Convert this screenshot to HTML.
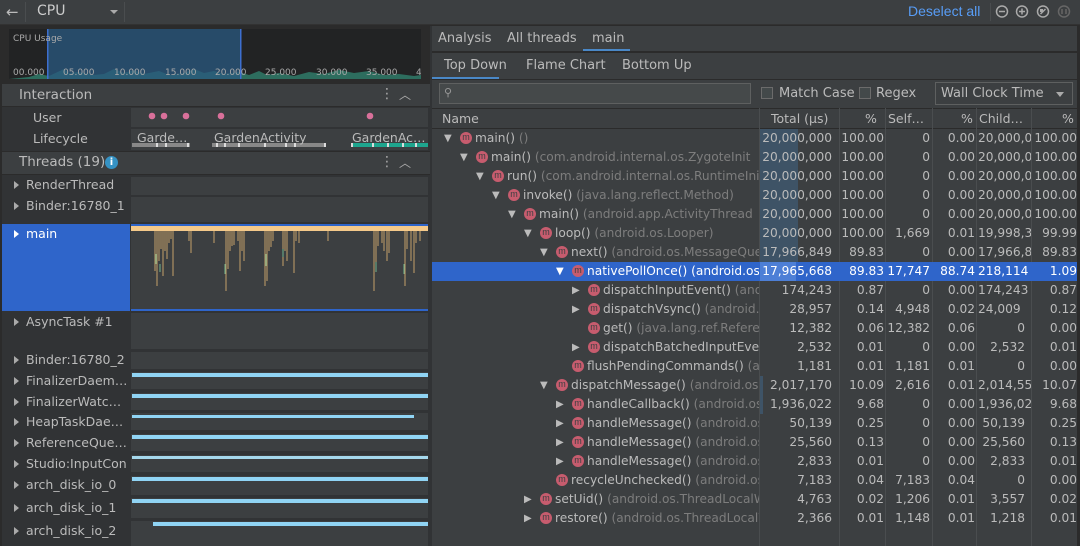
<!DOCTYPE html>
<html><head><meta charset="utf-8">
<style>
*{box-sizing:border-box;margin:0;padding:0}
body{width:1080px;height:546px;background:#2b2b2b;font-family:"DejaVu Sans","Liberation Sans",sans-serif;font-size:13px;color:#bbbbbb;position:relative;overflow:hidden}
.a{position:absolute}
.t{position:absolute;white-space:nowrap}
.row{position:absolute;left:432px;width:648px;height:19px;font-size:12.2px}
.nm{position:absolute;left:0;top:0;width:327px;height:19px;overflow:hidden;white-space:nowrap}
.v{position:absolute;top:0;height:19px;line-height:19px;text-align:right;white-space:nowrap;overflow:hidden}
.ic{display:inline-block;width:12px;height:12px;border-radius:50%;background:#c75c6e;color:#3c3f41;font-size:9px;line-height:11px;text-align:center;vertical-align:middle;position:relative;top:-1px;margin-right:3px;font-family:"Liberation Sans",sans-serif}
.ar{position:absolute;top:0;font-size:10px;color:#bbb;line-height:19px}
.g{color:#7d7d7d}
.lab{position:absolute;left:0;width:130px;color:#bbb;white-space:nowrap;overflow:hidden;font-size:12.5px}
.trk{position:absolute;left:131px;width:297px;background:#3c3f41}
.tri{display:inline-block;width:0;height:0;border-left:5px solid #aaa;border-top:4px solid transparent;border-bottom:4px solid transparent;margin:0 7px 0 14px}
</style></head><body>
<div class="a" style="left:0;top:0;width:1080px;height:25px;background:#3c3f41;border-bottom:1px solid #323232"></div>
<div class="t" style="left:6px;top:3px;font-size:15px;color:#bbb">←</div>
<div class="a" style="left:25px;top:2px;width:1px;height:20px;background:#4a4d4f"></div>
<div class="t" style="left:37px;top:3px;font-size:14px;color:#ccc">CPU</div>
<div class="a" style="left:110px;top:10px;border-left:4px solid transparent;border-right:4px solid transparent;border-top:4px solid #aaa"></div>
<div class="a" style="left:124px;top:2px;width:1px;height:20px;background:#4a4d4f"></div>
<div class="t" style="left:908px;top:3px;font-size:14px;color:#589df6;font-family:'Liberation Sans',sans-serif">Deselect all</div>
<div class="a" style="left:990px;top:3px;width:1px;height:18px;background:#4a4d4f"></div>
<svg class="a" style="left:994px;top:4px" width="84" height="17" viewBox="0 0 84 17" fill="none" stroke="#aaa" stroke-width="1.5">
<circle cx="8" cy="7.5" r="5.5"/><path d="M5 7.5h6"/>
<circle cx="28" cy="7.5" r="5.5"/><path d="M25 7.5h6M28 4.5v6"/>
<circle cx="49" cy="7.5" r="5.5"/><path d="M46.5 10l5-5" /><rect x="46" y="5" width="3" height="3" fill="#aaa" stroke="none"/>
<circle cx="70" cy="7.5" r="5.5" stroke="#666"/><path d="M68 5v5M72 5v5" stroke="#666"/>
</svg>
<div class="a" style="left:0;top:26px;width:430px;height:520px;background:#2b2b2b"></div>
<div class="a" style="left:430px;top:26px;width:2px;height:520px;background:#313335"></div>
<div class="a" style="left:9px;top:29px;width:412px;height:50px;background:#222324"></div>
<svg class="a" style="left:9px;top:29px" width="412" height="50">
<path d="M0 50 L20 48 L30 45 L40 47 L55 40 L60 44 L70 43 L85 46 L95 45 L105 40 L115 44 L125 41 L135 45 L150 42 L160 46 L175 44 L185 40 L195 44 L205 42 L215 45 L230 43 L240 46 L250 42 L258 46 L270 44 L285 47 L300 43 L315 45 L330 41 L345 44 L360 42 L375 46 L390 45 L405 47 L412 46 L412 50Z" fill="#2f7a68" opacity="0.85"/>
<rect x="38" y="0" width="194" height="50" fill="#2a5a80" opacity="0.75"/>
<rect x="38" y="0" width="1.5" height="50" fill="#3d6fd0"/><rect x="231" y="0" width="1.5" height="50" fill="#3d6fd0"/>
<g fill="#aaa" font-family="DejaVu Sans, sans-serif" font-size="9">
<text x="4" y="12">CPU Usage</text>
<text x="4" y="46">00.000</text><text x="54" y="46">05.000</text><text x="105" y="46">10.000</text><text x="156" y="46">15.000</text><text x="206" y="46">20.000</text><text x="256" y="46">25.000</text><text x="307" y="46">30.000</text><text x="357" y="46">35.000</text><text x="407" y="46">4</text>
</g></svg>
<div class="a" style="left:2px;top:84px;width:428px;height:22px;background:#3c3f41"></div>
<div class="t" style="left:19px;top:87px;font-size:13.5px">Interaction</div>
<div class="t" style="left:380px;top:86px;font-size:14px;color:#aaa">⋮</div>
<div class="t" style="left:399px;top:86px;font-size:12px;color:#aaa">︿</div>
<div class="a" style="left:2px;top:107px;width:428px;height:44px;background:#313335"></div>
<div class="t" style="left:33px;top:110px;font-size:12.5px">User</div>
<div class="t" style="left:33px;top:131px;font-size:12.5px">Lifecycle</div>
<div class="a" style="left:131px;top:108px;width:297px;height:19px;background:#3c3f41"></div>
<svg class="a" style="left:131px;top:108px" width="297" height="42">
<g fill="#d9709a"><circle cx="21" cy="8" r="3.3"/><circle cx="33" cy="8" r="3.3"/><circle cx="55" cy="8" r="3.3"/><circle cx="90" cy="8" r="3.3"/><circle cx="239" cy="8" r="3.3"/></g>
<rect x="0" y="21" width="297" height="21" fill="#3c3f41"/>
<rect x="1" y="35" width="58" height="4" fill="#888"/><rect x="81" y="35" width="114" height="4" fill="#888"/><rect x="220" y="35" width="77" height="4" fill="#1ea58e"/>
<g fill="#ddd"><rect x="25" y="35" width="2" height="4"/><rect x="34" y="35" width="2" height="4"/><rect x="56" y="35" width="2" height="4"/><rect x="85" y="35" width="2" height="4"/><rect x="93" y="35" width="2" height="4"/><rect x="107" y="35" width="2" height="4"/><rect x="133" y="35" width="2" height="4"/><rect x="154" y="35" width="2" height="4"/><rect x="163" y="35" width="2" height="4"/><rect x="193" y="35" width="2" height="4"/><rect x="220" y="35" width="2" height="4"/><rect x="241" y="35" width="2" height="4"/><rect x="256" y="35" width="2" height="4"/><rect x="271" y="35" width="2" height="4"/><rect x="284" y="35" width="2" height="4"/></g>
<g fill="#bbb" font-family="DejaVu Sans, sans-serif" font-size="12.5"><text x="6" y="34">Garde…</text><text x="83" y="34">GardenActivity</text><text x="221" y="34">GardenAc…</text></g>
</svg>
<div class="a" style="left:2px;top:152px;width:428px;height:22px;background:#3c3f41"></div>
<div class="t" style="left:19px;top:154px;font-size:13.5px">Threads (19)</div>
<div class="a" style="left:105px;top:156px;width:13px;height:13px;border-radius:50%;background:#3592c4;color:#fff;font-size:10px;font-weight:bold;text-align:center;line-height:13px">i</div>
<div class="t" style="left:380px;top:154px;font-size:14px;color:#aaa">⋮</div>
<div class="t" style="left:399px;top:154px;font-size:12px;color:#aaa">︿</div>
<div class="a" style="left:2px;top:175px;width:428px;height:371px;background:#313335"></div>
<div class="lab" style="top:177px"><span class="tri"></span>RenderThread</div>
<div class="trk" style="top:177px;height:18px"></div>
<div class="lab" style="top:198px"><span class="tri"></span>Binder:16780_1</div>
<div class="trk" style="top:197px;height:25px"></div>
<div class="a" style="left:2px;top:224px;width:128px;height:87px;background:#2f65ca"></div>
<div class="lab" style="top:226px;color:#fff"><span class="tri" style="border-left-color:#fff"></span>main</div>
<div class="trk" style="top:224px;height:87px"></div>
<svg class="a" style="left:131px;top:224px" width="297" height="88">
<rect x="0" y="0" width="297" height="2" fill="#2f65ca"/>
<rect x="0" y="2" width="297" height="5" fill="#f4c98a"/>
<rect x="0" y="85" width="297" height="2" fill="#2f65ca"/>
<g stroke="#e6b874" stroke-width="0.8">
<path d="M24 7v40M26 7v55M28 7v30M30 7v18M32 7v45M34 7v20M36 7v28M38 7v12M40 7v8M42 7v45M58 7v10M60 7v22M83 7v12M95 7v60M97 7v38M99 7v20M101 7v15M103 7v14M107 7v10M109 7v40M111 7v20M113 7v30M134 7v55M136 7v50M138 7v20M140 7v16M142 7v10M152 7v35M154 7v20M156 7v30M163 7v42M165 7v10M168 7v12M197 7v10M243 7v60M245 7v38M247 7v15M251 7v12M253 7v20M256 7v30M258 7v22M274 7v55M276 7v18M280 7v30M283 7v42M285 7v12M289 7v10"/>
</g>
<g stroke="#6fb58f" stroke-width="1"><path d="M25 30v10M29 40v8M94 40v10M135 30v12M245 38v10M273 40v10M152 25v8"/></g>
</svg>
<div class="lab" style="top:314px"><span class="tri"></span>AsyncTask #1</div>
<div class="trk" style="top:313px;height:36px"></div>
<div class="lab" style="top:352px"><span class="tri"></span>Binder:16780_2</div>
<div class="trk" style="top:352px;height:17px"></div>
<div class="lab" style="top:373px"><span class="tri"></span>FinalizerDaem…</div>
<div class="trk" style="top:372px;height:17px"><div class="a" style="left:1px;top:1px;width:296px;height:4px;background:#90d4f4"></div></div>
<div class="lab" style="top:394px"><span class="tri"></span>FinalizerWatc…</div>
<div class="trk" style="top:393px;height:17px"><div class="a" style="left:1px;top:1px;width:296px;height:4px;background:#90d4f4"></div></div>
<div class="lab" style="top:414px"><span class="tri"></span>HeapTaskDae…</div>
<div class="trk" style="top:413px;height:17px"><div class="a" style="left:1px;top:2px;width:282px;height:3px;background:#90d4f4"></div></div>
<div class="lab" style="top:435px"><span class="tri"></span>ReferenceQue…</div>
<div class="trk" style="top:434px;height:17px"><div class="a" style="left:1px;top:1px;width:296px;height:4px;background:#90d4f4"></div></div>
<div class="lab" style="top:456px"><span class="tri"></span>Studio:InputCon</div>
<div class="trk" style="top:455px;height:17px"><div class="a" style="left:1px;top:1px;width:296px;height:3px;background:#a5d8ec"></div></div>
<div class="lab" style="top:477px"><span class="tri"></span>arch_disk_io_0</div>
<div class="trk" style="top:476px;height:19px"><div class="a" style="left:1px;top:1px;width:296px;height:4px;background:#90d4f4"></div></div>
<div class="lab" style="top:500px"><span class="tri"></span>arch_disk_io_1</div>
<div class="trk" style="top:498px;height:20px"><div class="a" style="left:1px;top:1px;width:296px;height:4px;background:#90d4f4"></div></div>
<div class="lab" style="top:523px"><span class="tri"></span>arch_disk_io_2</div>
<div class="trk" style="top:521px;height:25px"><div class="a" style="left:22px;top:1px;width:275px;height:4px;background:#90d4f4"></div></div>

<div class="a" style="left:432px;top:26px;width:648px;height:26px;background:#3c3f41;border-bottom:1px solid #2b2b2b"></div>
<div class="t" style="left:438px;top:31px">Analysis</div>
<div class="t" style="left:507px;top:31px">All threads</div>
<div class="t" style="left:592px;top:31px">main</div>
<div class="a" style="left:583px;top:49px;width:47px;height:2px;background:#4a88c7"></div>
<div class="a" style="left:432px;top:53px;width:648px;height:27px;background:#3c3f41;border-bottom:1px solid #2b2b2b"></div>
<div class="t" style="left:444px;top:58px">Top Down</div>
<div class="t" style="left:526px;top:58px">Flame Chart</div>
<div class="t" style="left:622px;top:58px">Bottom Up</div>
<div class="a" style="left:432px;top:77px;width:67px;height:2px;background:#4a88c7"></div>
<div class="a" style="left:432px;top:80px;width:648px;height:28px;background:#3c3f41"></div>
<div class="a" style="left:439px;top:83px;width:312px;height:21px;background:#45494a;border:1px solid #5e6060"></div>
<div class="t" style="left:444px;top:86px;font-size:11px;color:#999">⚲</div>
<div class="a" style="left:761px;top:87px;width:12px;height:12px;border:1px solid #6b6b6b;background:#43494a"></div>
<div class="t" style="left:779px;top:86px">Match Case</div>
<div class="a" style="left:859px;top:87px;width:12px;height:12px;border:1px solid #6b6b6b;background:#43494a"></div>
<div class="t" style="left:876px;top:86px">Regex</div>
<div class="a" style="left:935px;top:82px;width:138px;height:23px;border:1px solid #5e6060;background:#3c3f41"></div>
<div class="t" style="left:941px;top:86px">Wall Clock Time</div>
<div class="a" style="left:1056px;top:92px;border-left:4px solid transparent;border-right:4px solid transparent;border-top:5px solid #aaa"></div>
<div class="a" style="left:432px;top:108px;width:648px;height:20px;background:#3c3f41;border-top:1px solid #2b2b2b"></div>
<div class="t" style="left:442px;top:111px;font-size:12.5px">Name</div>
<div class="t" style="left:771px;top:111px;font-size:12.5px">Total (µs)</div>
<div class="t" style="left:865px;top:111px;font-size:12.5px">%</div>
<div class="t" style="left:888px;top:111px;font-size:12.5px">Self…</div>
<div class="t" style="left:961px;top:111px;font-size:12.5px">%</div>
<div class="t" style="left:979px;top:111px;font-size:12.5px">Child…</div>
<div class="t" style="left:1062px;top:111px;font-size:12.5px">%</div>
<div class="a" style="left:432px;top:129px;width:648px;height:417px;background:#3c3f41"></div>
<div class="a" style="left:759px;top:108px;width:1px;height:438px;background:#4a4d4f"></div>
<div class="a" style="left:839px;top:108px;width:1px;height:438px;background:#4a4d4f"></div>
<div class="a" style="left:885px;top:108px;width:1px;height:438px;background:#4a4d4f"></div>
<div class="a" style="left:932px;top:108px;width:1px;height:438px;background:#4a4d4f"></div>
<div class="a" style="left:976px;top:108px;width:1px;height:438px;background:#4a4d4f"></div>
<div class="a" style="left:1031px;top:108px;width:1px;height:438px;background:#4a4d4f"></div>
<div class="a" style="left:1077px;top:26px;width:3px;height:520px;background:#2b2b2b"></div>
<div class="a" style="left:760px;top:129px;width:38px;height:133px;background:#3e5366"></div>
<div class="a" style="left:760px;top:243px;width:36px;height:19px;background:#3e5366"></div>
<div class="a" style="left:760px;top:376px;width:3px;height:38px;background:#3e5366"></div>
<div class="a" style="left:432px;top:262px;width:645px;height:19px;background:#2f65ca"></div>
<div class="a" style="left:760px;top:262px;width:36px;height:19px;background:#4d7fd6"></div>

<div id="rows">
<div class="row" style="top:129px"><span class="ar" style="left:12px">▼</span><div class="nm" style="padding-left:28px;line-height:19px"><span class="ic">m</span>main() <span class="g">()</span></div><div class="v" style="left:328px;width:72px">20,000,000</div><div class="v" style="left:408px;width:44px">100.00</div><div class="v" style="left:454px;width:44px">0</div><div class="v" style="left:501px;width:42px">0.00</div><div class="v" style="left:546px;width:53px;text-align:left">20,000,0</div><div class="v" style="left:600px;width:45px">100.00</div></div>
<div class="row" style="top:148px"><span class="ar" style="left:28px">▼</span><div class="nm" style="padding-left:44px;line-height:19px"><span class="ic">m</span>main() <span class="g">(com.android.internal.os.ZygoteInit</span></div><div class="v" style="left:328px;width:72px">20,000,000</div><div class="v" style="left:408px;width:44px">100.00</div><div class="v" style="left:454px;width:44px">0</div><div class="v" style="left:501px;width:42px">0.00</div><div class="v" style="left:546px;width:53px;text-align:left">20,000,0</div><div class="v" style="left:600px;width:45px">100.00</div></div>
<div class="row" style="top:167px"><span class="ar" style="left:44px">▼</span><div class="nm" style="padding-left:60px;line-height:19px"><span class="ic">m</span>run() <span class="g">(com.android.internal.os.RuntimeInit</span></div><div class="v" style="left:328px;width:72px">20,000,000</div><div class="v" style="left:408px;width:44px">100.00</div><div class="v" style="left:454px;width:44px">0</div><div class="v" style="left:501px;width:42px">0.00</div><div class="v" style="left:546px;width:53px;text-align:left">20,000,0</div><div class="v" style="left:600px;width:45px">100.00</div></div>
<div class="row" style="top:186px"><span class="ar" style="left:60px">▼</span><div class="nm" style="padding-left:76px;line-height:19px"><span class="ic">m</span>invoke() <span class="g">(java.lang.reflect.Method)</span></div><div class="v" style="left:328px;width:72px">20,000,000</div><div class="v" style="left:408px;width:44px">100.00</div><div class="v" style="left:454px;width:44px">0</div><div class="v" style="left:501px;width:42px">0.00</div><div class="v" style="left:546px;width:53px;text-align:left">20,000,0</div><div class="v" style="left:600px;width:45px">100.00</div></div>
<div class="row" style="top:205px"><span class="ar" style="left:76px">▼</span><div class="nm" style="padding-left:92px;line-height:19px"><span class="ic">m</span>main() <span class="g">(android.app.ActivityThread</span></div><div class="v" style="left:328px;width:72px">20,000,000</div><div class="v" style="left:408px;width:44px">100.00</div><div class="v" style="left:454px;width:44px">0</div><div class="v" style="left:501px;width:42px">0.00</div><div class="v" style="left:546px;width:53px;text-align:left">20,000,0</div><div class="v" style="left:600px;width:45px">100.00</div></div>
<div class="row" style="top:224px"><span class="ar" style="left:92px">▼</span><div class="nm" style="padding-left:108px;line-height:19px"><span class="ic">m</span>loop() <span class="g">(android.os.Looper)</span></div><div class="v" style="left:328px;width:72px">20,000,000</div><div class="v" style="left:408px;width:44px">100.00</div><div class="v" style="left:454px;width:44px">1,669</div><div class="v" style="left:501px;width:42px">0.01</div><div class="v" style="left:546px;width:53px;text-align:left">19,998,3</div><div class="v" style="left:600px;width:45px">99.99</div></div>
<div class="row" style="top:243px"><span class="ar" style="left:108px">▼</span><div class="nm" style="padding-left:124px;line-height:19px"><span class="ic">m</span>next() <span class="g">(android.os.MessageQueue</span></div><div class="v" style="left:328px;width:72px">17,966,849</div><div class="v" style="left:408px;width:44px">89.83</div><div class="v" style="left:454px;width:44px">0</div><div class="v" style="left:501px;width:42px">0.00</div><div class="v" style="left:546px;width:53px;text-align:left">17,966,8</div><div class="v" style="left:600px;width:45px">89.83</div></div>
<div class="row" style="top:262px;color:#fff"><span class="ar" style="left:124px;color:#fff">▼</span><div class="nm" style="padding-left:140px;line-height:19px"><span class="ic">m</span>nativePollOnce() (android.os.MessageQueue)</div><div class="v" style="left:328px;width:72px">17,965,668</div><div class="v" style="left:408px;width:44px">89.83</div><div class="v" style="left:454px;width:44px">17,747</div><div class="v" style="left:501px;width:42px">88.74</div><div class="v" style="left:546px;width:53px;text-align:left">218,114</div><div class="v" style="left:600px;width:45px">1.09</div></div>
<div class="row" style="top:281px"><span class="ar" style="left:140px">▶</span><div class="nm" style="padding-left:156px;line-height:19px"><span class="ic">m</span>dispatchInputEvent() <span class="g">(android.view</span></div><div class="v" style="left:328px;width:72px">174,243</div><div class="v" style="left:408px;width:44px">0.87</div><div class="v" style="left:454px;width:44px">0</div><div class="v" style="left:501px;width:42px">0.00</div><div class="v" style="left:546px;width:53px;text-align:left">174,243</div><div class="v" style="left:600px;width:45px">0.87</div></div>
<div class="row" style="top:300px"><span class="ar" style="left:140px">▶</span><div class="nm" style="padding-left:156px;line-height:19px"><span class="ic">m</span>dispatchVsync() <span class="g">(android.view</span></div><div class="v" style="left:328px;width:72px">28,957</div><div class="v" style="left:408px;width:44px">0.14</div><div class="v" style="left:454px;width:44px">4,948</div><div class="v" style="left:501px;width:42px">0.02</div><div class="v" style="left:546px;width:53px;text-align:left">24,009</div><div class="v" style="left:600px;width:45px">0.12</div></div>
<div class="row" style="top:319px"><div class="nm" style="padding-left:156px;line-height:19px"><span class="ic">m</span>get() <span class="g">(java.lang.ref.Reference</span></div><div class="v" style="left:328px;width:72px">12,382</div><div class="v" style="left:408px;width:44px">0.06</div><div class="v" style="left:454px;width:44px">12,382</div><div class="v" style="left:501px;width:42px">0.06</div><div class="v" style="left:546px;width:47px">0</div><div class="v" style="left:600px;width:45px">0.00</div></div>
<div class="row" style="top:338px"><span class="ar" style="left:140px">▶</span><div class="nm" style="padding-left:156px;line-height:19px"><span class="ic">m</span>dispatchBatchedInputEvents()</div><div class="v" style="left:328px;width:72px">2,532</div><div class="v" style="left:408px;width:44px">0.01</div><div class="v" style="left:454px;width:44px">0</div><div class="v" style="left:501px;width:42px">0.00</div><div class="v" style="left:546px;width:47px">2,532</div><div class="v" style="left:600px;width:45px">0.01</div></div>
<div class="row" style="top:357px"><div class="nm" style="padding-left:140px;line-height:19px"><span class="ic">m</span>flushPendingCommands() <span class="g">(android</span></div><div class="v" style="left:328px;width:72px">1,181</div><div class="v" style="left:408px;width:44px">0.01</div><div class="v" style="left:454px;width:44px">1,181</div><div class="v" style="left:501px;width:42px">0.01</div><div class="v" style="left:546px;width:47px">0</div><div class="v" style="left:600px;width:45px">0.00</div></div>
<div class="row" style="top:376px"><span class="ar" style="left:108px">▼</span><div class="nm" style="padding-left:124px;line-height:19px"><span class="ic">m</span>dispatchMessage() <span class="g">(android.os.Handler)</span></div><div class="v" style="left:328px;width:72px">2,017,170</div><div class="v" style="left:408px;width:44px">10.09</div><div class="v" style="left:454px;width:44px">2,616</div><div class="v" style="left:501px;width:42px">0.01</div><div class="v" style="left:546px;width:53px;text-align:left">2,014,55</div><div class="v" style="left:600px;width:45px">10.07</div></div>
<div class="row" style="top:395px"><span class="ar" style="left:124px">▶</span><div class="nm" style="padding-left:140px;line-height:19px"><span class="ic">m</span>handleCallback() <span class="g">(android.os.Handler)</span></div><div class="v" style="left:328px;width:72px">1,936,022</div><div class="v" style="left:408px;width:44px">9.68</div><div class="v" style="left:454px;width:44px">0</div><div class="v" style="left:501px;width:42px">0.00</div><div class="v" style="left:546px;width:53px;text-align:left">1,936,02</div><div class="v" style="left:600px;width:45px">9.68</div></div>
<div class="row" style="top:414px"><span class="ar" style="left:124px">▶</span><div class="nm" style="padding-left:140px;line-height:19px"><span class="ic">m</span>handleMessage() <span class="g">(android.os.Handler)</span></div><div class="v" style="left:328px;width:72px">50,139</div><div class="v" style="left:408px;width:44px">0.25</div><div class="v" style="left:454px;width:44px">0</div><div class="v" style="left:501px;width:42px">0.00</div><div class="v" style="left:546px;width:47px">50,139</div><div class="v" style="left:600px;width:45px">0.25</div></div>
<div class="row" style="top:433px"><span class="ar" style="left:124px">▶</span><div class="nm" style="padding-left:140px;line-height:19px"><span class="ic">m</span>handleMessage() <span class="g">(android.os.Handler)</span></div><div class="v" style="left:328px;width:72px">25,560</div><div class="v" style="left:408px;width:44px">0.13</div><div class="v" style="left:454px;width:44px">0</div><div class="v" style="left:501px;width:42px">0.00</div><div class="v" style="left:546px;width:47px">25,560</div><div class="v" style="left:600px;width:45px">0.13</div></div>
<div class="row" style="top:452px"><span class="ar" style="left:124px">▶</span><div class="nm" style="padding-left:140px;line-height:19px"><span class="ic">m</span>handleMessage() <span class="g">(android.os.Handler)</span></div><div class="v" style="left:328px;width:72px">2,833</div><div class="v" style="left:408px;width:44px">0.01</div><div class="v" style="left:454px;width:44px">0</div><div class="v" style="left:501px;width:42px">0.00</div><div class="v" style="left:546px;width:47px">2,833</div><div class="v" style="left:600px;width:45px">0.01</div></div>
<div class="row" style="top:471px"><div class="nm" style="padding-left:124px;line-height:19px"><span class="ic">m</span>recycleUnchecked() <span class="g">(android.os.Message)</span></div><div class="v" style="left:328px;width:72px">7,183</div><div class="v" style="left:408px;width:44px">0.04</div><div class="v" style="left:454px;width:44px">7,183</div><div class="v" style="left:501px;width:42px">0.04</div><div class="v" style="left:546px;width:47px">0</div><div class="v" style="left:600px;width:45px">0.00</div></div>
<div class="row" style="top:490px"><span class="ar" style="left:92px">▶</span><div class="nm" style="padding-left:108px;line-height:19px"><span class="ic">m</span>setUid() <span class="g">(android.os.ThreadLocalWorkSource)</span></div><div class="v" style="left:328px;width:72px">4,763</div><div class="v" style="left:408px;width:44px">0.02</div><div class="v" style="left:454px;width:44px">1,206</div><div class="v" style="left:501px;width:42px">0.01</div><div class="v" style="left:546px;width:47px">3,557</div><div class="v" style="left:600px;width:45px">0.02</div></div>
<div class="row" style="top:509px"><span class="ar" style="left:92px">▶</span><div class="nm" style="padding-left:108px;line-height:19px"><span class="ic">m</span>restore() <span class="g">(android.os.ThreadLocalWorkSource)</span></div><div class="v" style="left:328px;width:72px">2,366</div><div class="v" style="left:408px;width:44px">0.01</div><div class="v" style="left:454px;width:44px">1,148</div><div class="v" style="left:501px;width:42px">0.01</div><div class="v" style="left:546px;width:47px">1,218</div><div class="v" style="left:600px;width:45px">0.01</div></div>
</div>
</body></html>
